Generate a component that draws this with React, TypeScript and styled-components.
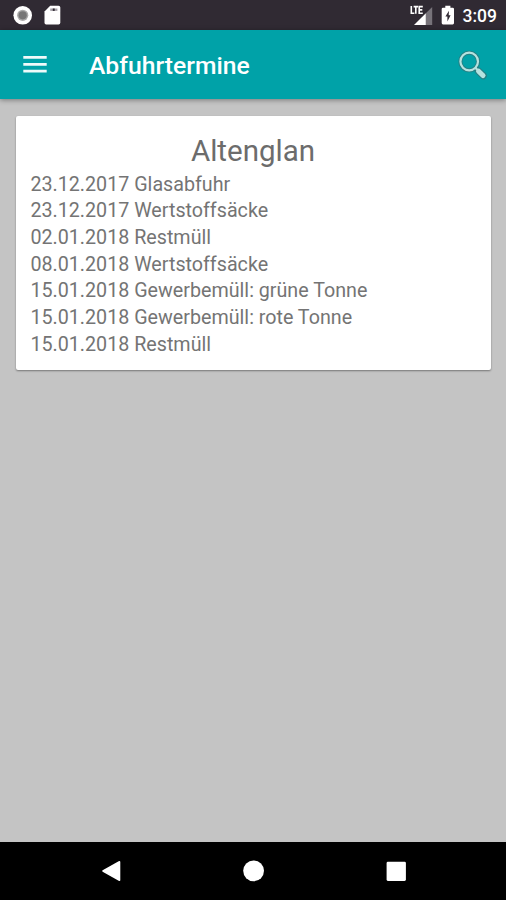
import React from "react";
import styled, { createGlobalStyle } from "styled-components";

const GlobalStyle = createGlobalStyle`
  * { box-sizing: border-box; }
  body { margin: 0; font-family: Roboto, "Liberation Sans", sans-serif; }
`;

const Screen = styled.div`
  display: flex;
  flex-direction: column;
  width: 506px;
  height: 900px;
  overflow: hidden;
  background: #c4c4c4;
`;

const StatusBar = styled.header`
  display: flex;
  flex: none;
  align-items: center;
  justify-content: space-between;
  height: 30px;
  padding: 0 9px 0 13px;
  background: #302a33;
  color: #fff;
`;

const StatusGroup = styled.div<{ $gap: number }>`
  display: flex;
  align-items: center;
  gap: ${(p) => p.$gap}px;
`;

const Clock = styled.time`
  margin-left: 1px;
  font-size: 17.5px;
  font-weight: 500;
  line-height: 30px;
  padding-top: 2px;
`;

const Toolbar = styled.div`
  display: flex;
  flex: none;
  align-items: center;
  height: 69px;
  padding: 0 18px 0 23px;
  background: #00a2a8;
  box-shadow: 0 1px 5px rgba(0, 0, 0, 0.4);
`;

const IconButton = styled.button`
  display: flex;
  padding: 0;
  border: 0;
  background: none;
`;

const Title = styled.h1`
  flex: 1;
  margin: 3px 0 0 42px;
  color: #fff;
  font-size: 24.7px;
  font-weight: 500;
  line-height: 30px;
`;

const Content = styled.main`
  flex: 1;
  padding: 17px 15px 0 16px;
`;

const Card = styled.section`
  height: 254px;
  padding: 17px 15px 0 14px;
  border-radius: 2px;
  background: #fff;
  color: #6c6c6c;
  box-shadow: 0 1px 2px rgba(0, 0, 0, 0.4);
`;

const Place = styled.h2`
  margin: 0;
  font-size: 29.5px;
  font-weight: 400;
  line-height: 37px;
  text-align: center;
`;

const Dates = styled.ul`
  margin: 0;
  padding: 1.5px 0 0 0.4px;
  list-style: none;
`;

const DateRow = styled.li`
  color: #747474;
  font-size: 19.7px;
  line-height: 26.7px;
  white-space: nowrap;
`;

const NavBar = styled.nav`
  display: flex;
  flex: none;
  align-items: center;
  justify-content: space-between;
  height: 58px;
  padding: 0 99px 0 101px;
  background: #000;
`;

const rows = [
  ["23.12.2017", "Glasabfuhr"],
  ["23.12.2017", "Wertstoffsäcke"],
  ["02.01.2018", "Restmüll"],
  ["08.01.2018", "Wertstoffsäcke"],
  ["15.01.2018", "Gewerbemüll: grüne Tonne"],
  ["15.01.2018", "Gewerbemüll: rote Tonne"],
  ["15.01.2018", "Restmüll"],
];

const RecordIcon = () => (
  <svg width="20" height="20" viewBox="0 0 20 20">
    <circle cx="9.7" cy="10.3" r="9.3" fill="#fff" />
    <circle cx="9.7" cy="10.3" r="5.6" fill="#aaa" />
    <circle cx="9.7" cy="10.3" r="4.1" fill="#777" />
  </svg>
);

const SdCardIcon = () => (
  <svg width="17" height="20" viewBox="0 0 17 20">
    <path d="M6.2 .8H14.5Q16.3 .8 16.3 2.6V17.8Q16.3 19.6 14.5 19.6H2.2Q.5 19.6 .5 17.8V6.5Z" fill="#fff" />
    <path d="M6.2 3.5h7.2v2.4H6.2z" fill="#a5a1a7" />
    <path d="M8.8 3.5h1.9v2.4H8.8z" fill="#302a33" />
  </svg>
);

const SignalIcon = () => (
  <svg width="24" height="22" viewBox="0 0 24 22">
    <path d="M22.2 3V21H15.8V9.3Z" fill="#77737a" />
    <path d="M15.8 9.3V21H4Z" fill="#fff" />
    <path d="M1.3 2V9.2H4.4M3.6 2.6H8M5.8 2.6V9.8M12.8 2.6H9.2V9.2H12.8M9.2 5.9H12.3" fill="none" stroke="#fff" strokeWidth="1.6" />
  </svg>
);

const BatteryIcon = () => (
  <svg width="14" height="20" viewBox="0 0 14 20">
    <path d="M4.3 .7H9.4V2.7H11.7Q13 2.7 13 4V18Q13 19.4 11.7 19.4H2Q.7 19.4 .7 18V4Q.7 2.7 2 2.7H4.3Z" fill="#fff" />
    <path d="M8 5.8 4.4 11.6H6.4V16.6L9.6 10.3H7.7Z" fill="#302a33" />
  </svg>
);

const MenuIcon = () => (
  <svg width="24" height="18" viewBox="0 0 24 18">
    <path d="M.3 1.4H23.7M.3 8.4H23.7M.3 15.2H23.7" stroke="#effafa" strokeWidth="2.7" />
  </svg>
);

const SearchIcon = () => (
  <svg width="30" height="30" viewBox="0 0 30 30">
    <circle cx="11.2" cy="11.5" r="8.8" fill="none" stroke="#267f83" strokeWidth="4" />
    <path d="M17.3 17.7 20 20.3" stroke="#267f83" strokeWidth="4.6" />
    <path d="M20.3 21 25.2 25.7" stroke="#267f83" strokeWidth="7.2" strokeLinecap="round" />
    <circle cx="11.2" cy="11.5" r="8.8" fill="none" stroke="#b5e2df" strokeWidth="2.2" />
    <path d="M17.3 17.7 20.3 20.7" stroke="#b5e2df" strokeWidth="2.2" />
    <path d="M20.6 21.2 25 25.5" stroke="#b5e2df" strokeWidth="5.1" strokeLinecap="round" />
  </svg>
);

const BackIcon = () => (
  <svg width="21" height="22" viewBox="0 0 21 22">
    <path d="M2 11 18.5 1.8V20.2Z" fill="#fff" stroke="#fff" strokeWidth="1.6" strokeLinejoin="round" />
  </svg>
);

const HomeIcon = () => (
  <svg width="22" height="22" viewBox="0 0 22 22">
    <circle cx="10.6" cy="10.8" r="10.4" fill="#fff" />
  </svg>
);

const RecentsIcon = () => (
  <svg width="22" height="22" viewBox="0 0 22 22">
    <rect x="1.6" y="1.7" width="19.3" height="19.2" rx="1.3" fill="#fff" />
  </svg>
);

export default function App() {
  return (
    <>
      <GlobalStyle />
      <Screen>
        <StatusBar>
          <StatusGroup $gap={11}>
            <RecordIcon />
            <SdCardIcon />
          </StatusGroup>
          <StatusGroup $gap={7}>
            <SignalIcon />
            <BatteryIcon />
            <Clock>3:09</Clock>
          </StatusGroup>
        </StatusBar>
        <Toolbar>
          <IconButton aria-label="Menü"><MenuIcon /></IconButton>
          <Title>Abfuhrtermine</Title>
          <IconButton aria-label="Suche"><SearchIcon /></IconButton>
        </Toolbar>
        <Content>
          <Card>
            <Place>Altenglan</Place>
            <Dates>
              {rows.map(([date, kind], i) => (
                <DateRow key={i}>{date} {kind}</DateRow>
              ))}
            </Dates>
          </Card>
        </Content>
        <NavBar>
          <IconButton aria-label="Zurück"><BackIcon /></IconButton>
          <IconButton aria-label="Start"><HomeIcon /></IconButton>
          <IconButton aria-label="Übersicht"><RecentsIcon /></IconButton>
        </NavBar>
      </Screen>
    </>
  );
}
